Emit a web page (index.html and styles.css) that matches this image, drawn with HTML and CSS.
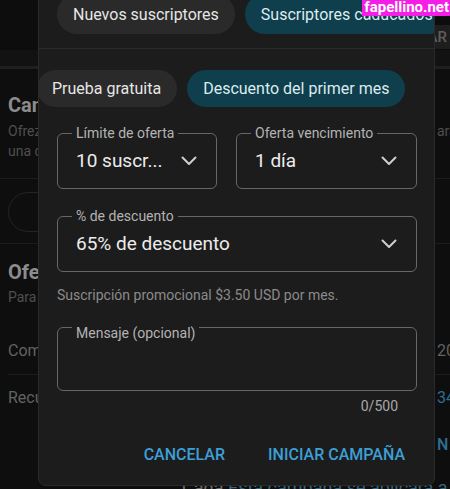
FILE: index.html
```html
<!DOCTYPE html>
<html lang="es">
<head>
<meta charset="utf-8">
<title>Campaña</title>
<link rel="stylesheet" href="styles.css">
</head>
<body>
<div class="page">
  <div class="bg">
    <div class="bg-top"><span class="bg-tab">CREAR</span></div>
    <div class="bg-band"></div>
    <section class="bg-card">
      <h2 class="bg-title">Campañas</h2>
      <div class="bg-desc-line"><span>Ofrezca una prueba gratuita o un descuento p</span><span>ara atraer suscriptores</span></div>
      <div class="bg-desc-line"><span>una campaña limitada a nuevos suscriptores o caducados.</span></div>
    </section>
    <div class="bg-btn-row"><div class="bg-outline-btn"></div></div>
    <section class="bg-card2">
      <h2 class="bg-title">Ofertas</h2>
      <p class="bg-desc">Para suscriptores nuevos y caducados</p>
    </section>
    <div class="bg-row bg-row-first"><span>Comienza</span><span>2024</span></div>
    <div class="bg-row bg-row-second"><span>Recuento</span><span class="bg-blue">34</span></div>
    <div class="bg-row bg-row-link"><span></span><span class="bg-blue">N</span></div>
    <p class="bg-foot">Cada <span class="bg-foot-link">Esta campaña se aplicará a nuevos</span></p>
  </div>

  <div class="dialog">
    <div class="chip-row chip-row-top">
      <span class="chip">Nuevos suscriptores</span>
      <span class="chip chip-on">Suscriptores caducados</span>
    </div>
    <div class="chip-row chip-row-second">
      <span class="chip">Prueba gratuita</span>
      <span class="chip chip-on">Descuento del primer mes</span>
    </div>

    <div class="field-grid">
      <fieldset class="field">
        <legend>Límite de oferta</legend>
        <div class="field-body"><span class="value">10 suscr...</span><svg class="chev" width="16" height="10" viewBox="0 0 16 10"><path d="M1.5 1.5 L8 8 L14.5 1.5" fill="none" stroke="#cfcfcf" stroke-width="2" stroke-linecap="round" stroke-linejoin="round"/></svg></div>
      </fieldset>
      <fieldset class="field">
        <legend>Oferta vencimiento</legend>
        <div class="field-body"><span class="value">1 día</span><svg class="chev" width="16" height="10" viewBox="0 0 16 10"><path d="M1.5 1.5 L8 8 L14.5 1.5" fill="none" stroke="#cfcfcf" stroke-width="2" stroke-linecap="round" stroke-linejoin="round"/></svg></div>
      </fieldset>
    </div>

    <fieldset class="field field-wide">
      <legend>% de descuento</legend>
      <div class="field-body"><span class="value">65% de descuento</span><svg class="chev" width="16" height="10" viewBox="0 0 16 10"><path d="M1.5 1.5 L8 8 L14.5 1.5" fill="none" stroke="#cfcfcf" stroke-width="2" stroke-linecap="round" stroke-linejoin="round"/></svg></div>
    </fieldset>

    <p class="helper">Suscripción promocional $3.50 USD por mes.</p>

    <fieldset class="field field-msg">
      <legend>Mensaje (opcional)</legend>
      <div class="msg-body"></div>
    </fieldset>
    <div class="counter">0/500</div>

    <div class="actions">
      <button class="btn" type="button">CANCELAR</button>
      <button class="btn" type="button">INICIAR CAMPAÑA</button>
    </div>
  </div>

  <span class="watermark">fapellino.net</span>
</div>
</body>
</html>
```

FILE: styles.css
```css
* { box-sizing: border-box; }
html, body {
  margin: 0;
  padding: 0;
  background: #0e0e0e;
  overflow: hidden;
}
body {
  font-family: Roboto, "Noto Sans", "Liberation Sans", sans-serif;
  width: 450px;
  height: 489px;
}
.page {
  position: relative;
  width: 450px;
  height: 489px;
  overflow: hidden;
  background: #0e0e0e;
}

/* ---------- background page (dimmed) ---------- */
.bg { width: 450px; }
.bg-top {
  height: 50px;
  display: flex;
  justify-content: flex-end;
  align-items: flex-end;
  padding-bottom: 1px;
  background: #0d0d0d;
}
.bg-tab {
  height: 24px;
  line-height: 24px;
  padding: 0 3px 0 12px;
  background: #1e1e1e;
  color: #5e5e5e;
  font-size: 15px;
  font-weight: 500;
}
.bg-band {
  height: 19px;
  background: #121212;
  border-bottom: 3px solid #1f1f1f;
}
.bg-card {
  padding: 24px 0 17px 8px;
  border-bottom: 1px solid #1d1d1d;
}
.bg-title {
  margin: 0;
  font-size: 20px;
  line-height: 24px;
  font-weight: 700;
  color: #8c8c8c;
  white-space: nowrap;
}
.bg-desc-line {
  display: grid;
  grid-template-columns: 429px 1fr;
  font-size: 14px;
  line-height: 20px;
  color: #4f4f4f;
  white-space: nowrap;
  overflow: hidden;
}
.bg-desc-line span { overflow: hidden; }
.bg-card .bg-title + .bg-desc-line { margin-top: 4px; }
.bg-btn-row {
  padding: 13px 0 11px 8px;
  border-bottom: 1px solid #1d1d1d;
}
.bg-outline-btn {
  height: 40px;
  width: 300px;
  border: 1px solid #242424;
  border-radius: 20px;
}
.bg-card2 { padding: 16px 0 0 8px; }
.bg-desc {
  margin: 3px 0 0;
  font-size: 14px;
  line-height: 20px;
  color: #4f4f4f;
  white-space: nowrap;
}
.bg-row {
  margin-left: 8px;
  display: grid;
  grid-template-columns: 429px 1fr;
  align-items: center;
  font-size: 16px;
  color: #636363;
  white-space: nowrap;
}
.bg-row span { overflow: hidden; }
.bg-row-first {
  margin-top: 20px;
  height: 48px;
  border-bottom: 1px solid #1d1d1d;
}
.bg-row-second { height: 44px; }
.bg-row-link { margin-top: 13px; height: 24px; font-weight: 500; }
.bg-blue { color: #2c6f94; }
.bg-foot {
  margin: 22px 0 0;
  padding-left: 182px;
  font-size: 18px;
  line-height: 20px;
  color: #6c6c6c;
  white-space: nowrap;
}
.bg-foot-link { color: #3a6478; }

/* ---------- dialog ---------- */
.dialog {
  position: absolute;
  left: 38px;
  top: -20px;
  width: 397px;
  background: #1c1c1c;
  border: 1px solid #2a2a2a;
  border-radius: 8px;
  padding: 13px 17px 13px 18px;
  overflow: hidden;
}
.chip-row {
  display: flex;
  gap: 10px;
  white-space: nowrap;
  overflow: hidden;
  margin-right: -17px;
}
.chip-row-top {
  padding-bottom: 14px;
  margin-left: -18px;
  padding-left: 18px;
  border-bottom: 1px solid #2c2c2c;
}
.chip-row-top .chip { height: 40px; border-radius: 20px; }
.chip-row-second {
  margin-top: 21px;
  margin-left: -20px;
}
.chip {
  flex: none;
  display: inline-flex;
  align-items: center;
  height: 37px;
  padding: 0 16px;
  border-radius: 19px;
  background: #2a2a2a;
  color: #e6e6e6;
  font-size: 16px;
}
.chip-row-second .chip:first-child { padding-left: 15px; }
.chip-on {
  background: #0f3e4c;
  color: #dcebef;
}

.field-grid {
  margin-top: 18px;
  display: grid;
  grid-template-columns: 160px 1fr;
  gap: 19px;
}
.field {
  margin: 0;
  min-width: 0;
  border: 1px solid #676767;
  border-radius: 6px;
  padding: 0 19px 0 14px;
}
.field legend {
  padding: 0 4px;
  font-size: 14px;
  line-height: 16px;
  color: #b3b3b3;
  white-space: nowrap;
}
.field-body {
  height: 47px;
  padding: 0 0 7px 4px;
  display: flex;
  align-items: center;
  justify-content: space-between;
}
.value {
  font-size: 19px;
  line-height: 22px;
  color: #ececec;
  white-space: nowrap;
}
.chev { flex: none; display: block; }
.field-wide { margin-top: 19px; }
.helper {
  margin: 13px 0 0;
  font-size: 14px;
  line-height: 20px;
  color: #8b8b8b;
}
.field-msg { margin-top: 8px; }
.field-msg legend { padding-top: 12px; }
.msg-body { height: 49px; }
.counter {
  margin-top: 6px;
  padding-right: 19px;
  text-align: right;
  font-size: 14px;
  line-height: 18px;
  color: #a9a9a9;
}
.actions {
  margin-top: 21px;
  display: flex;
  justify-content: flex-end;
  gap: 27px;
  padding-right: 4px;
}
.btn {
  height: 36px;
  padding: 0 8px;
  border: none;
  background: none;
  font-family: Roboto, "Noto Sans", "Liberation Sans", sans-serif;
  font-size: 16px;
  font-weight: 500;
  color: #3c9fd6;
}

.watermark {
  position: absolute;
  top: 0;
  right: 0;
  height: 16px;
  padding: 0 1px 0 2px;
  background: #f41ee6;
  color: #ffffff;
  font-size: 15px;
  line-height: 15px;
  font-weight: 700;
}
```
